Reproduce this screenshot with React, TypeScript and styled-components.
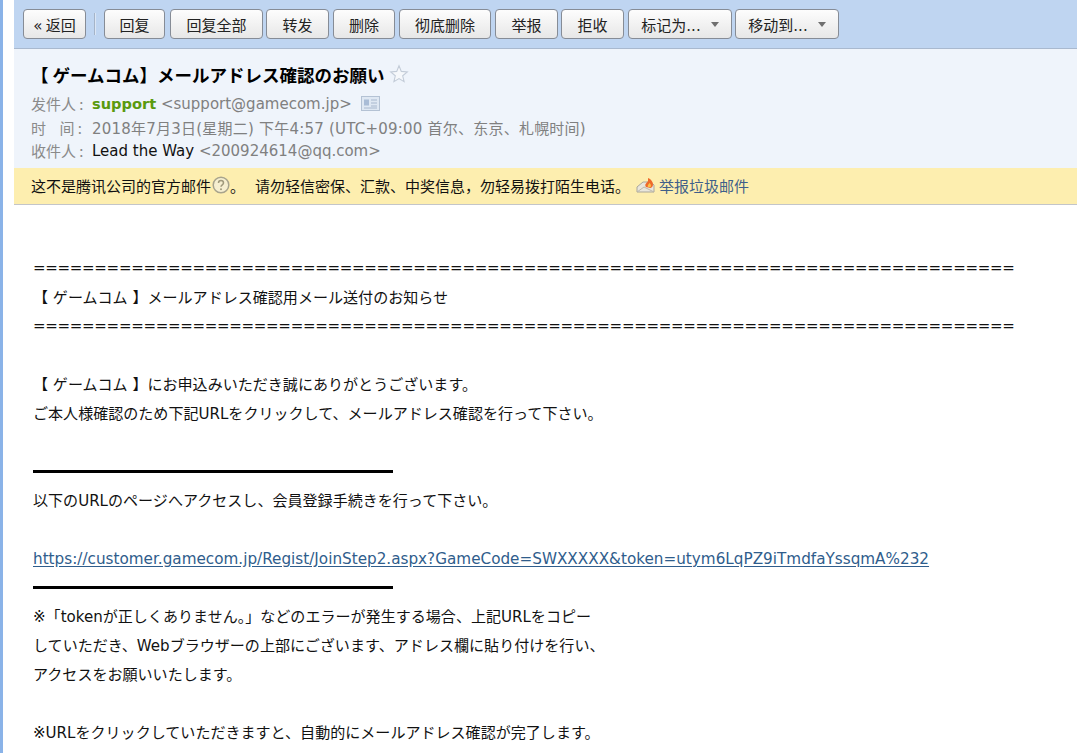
import React from "react";
import styled, { createGlobalStyle } from "styled-components";

const Global = createGlobalStyle`
  html, body { margin: 0; padding: 0; height: 753px; overflow: hidden; background: #fff; }
  body { font-family: "DejaVu Sans", "Noto Sans CJK SC", sans-serif; font-size: 15px; color: #000; }
`;
const Page = styled.div`
  display: flex;
  width: 1077px;
  height: 753px;
  overflow: hidden;
  background: #fff;
`;
const Strip = styled.div`
  width: 3px;
  margin-right: 11px;
  flex: none;
  background: #8ab3e8;
`;
const Main = styled.div`
  flex: 1;
  min-width: 0;
`;
const Toolbar = styled.div`
  height: 49px;
  display: flex;
  align-items: flex-start;
  padding: 9px 0 0 9px;
  box-sizing: border-box;
  background: #bfd5f1;
  border-bottom: 1px solid #a9b9cf;
`;
const Btn = styled.div<{ $w: number; $ml?: number }>`
  width: ${(p) => p.$w}px;
  margin-left: ${(p) => p.$ml ?? 3}px;
  height: 30px;
  flex: none;
  box-sizing: border-box;
  display: flex;
  align-items: center;
  justify-content: center;
  gap: 10px;
  border: 1px solid #868c96;
  border-radius: 4px;
  background: linear-gradient(#fdfdfd, #e7e7e7);
  font-family: "Noto Sans CJK SC", "DejaVu Sans", sans-serif;
  font-size: 15px;
  color: #222;
  white-space: pre;
`;
const Latin = styled.span`
  font-family: "DejaVu Sans", sans-serif;
  font-size: 15px;
`;
const Caret = styled.span`
  width: 0;
  height: 0;
  border-left: 4.5px solid transparent;
  border-right: 4.5px solid transparent;
  border-top: 5px solid #6f6f6f;
`;
const Sep = styled.div`
  width: 1px;
  height: 22px;
  margin: 4px 0 0 8px;
  background: #a5b4c8;
  border-right: 1px solid #dbe6f5;
  flex: none;
`;
const Header = styled.div`
  height: 119px;
  box-sizing: border-box;
  padding: 12px 0 0 17px;
  background: #eff4fb;
`;
const Title = styled.div`
  display: flex;
  align-items: center;
  height: 26px;
  margin-bottom: 5px;
  font-family: "Noto Sans CJK JP", sans-serif;
  font-size: 17.5px;
  font-weight: 700;
  color: #000;
  white-space: pre;
`;
const Meta = styled.div`
  display: flex;
  align-items: center;
  height: 23.5px;
  font-size: 15px;
  color: #808080;
`;
const MetaText = styled.span`
  white-space: pre;
`;
const TimeText = styled(MetaText)`
  letter-spacing: 0.22px;
`;
const Label = styled.span`
  display: inline-block;
  width: 61px;
  font-family: "Noto Sans CJK SC", sans-serif;
  color: #8a8a8a;
  white-space: pre;
`;
const Sender = styled.b`
  color: #5a9a0f;
  font-weight: 700;
  font-size: 14.6px;
`;
const Dark = styled.span`
  color: #111;
`;
const Warn = styled.div`
  height: 37px;
  box-sizing: border-box;
  padding: 0 0 2px 17px;
  display: flex;
  align-items: center;
  background: #fdeeaf;
  border-bottom: 1px solid #c3c5c9;
  font-family: "Noto Sans CJK SC", sans-serif;
  font-size: 15px;
  color: #111;
  white-space: pre;
`;
const WarnLink = styled.span`
  color: #3f5f8a;
  margin-left: 4px;
`;
const Body = styled.div`
  padding: 49px 0 0 19px;
`;
const Line = styled.div`
  height: 29px;
  box-sizing: border-box;
  padding-top: 1px;
  line-height: 28px;
  font-family: "DejaVu Sans", "Noto Sans CJK JP", sans-serif;
  font-size: 15.05px;
  color: #111;
  white-space: pre;
`;
const EqLine = styled(Line)`
  padding-top: 0;
  line-height: 29px;
  font-size: 15px;
  letter-spacing: -0.3px;
`;
const RuleLine = styled(Line)`
  padding-top: 0;
  display: flex;
  align-items: center;
`;
const Rule = styled.div`
  width: 360px;
  height: 3px;
  background: #000;
`;
const Mail = styled.span`
  color: #2f5d8c;
  font-size: 15.23px;
  text-decoration: underline;
  text-underline-offset: 2px;
`;

const Star = () => (
  <svg width="20" height="20" viewBox="0 0 20 20" style={{ marginLeft: 5 }}>
    <path d="M10 1.8l2.3 5.6 6 .5-4.6 3.9 1.4 5.9L10 14.6l-5.1 3.1 1.4-5.900L1.700 7.900l6-.5z" fill="#f6f8fb" stroke="#c3ccd8" strokeWidth="1.1" />
  </svg>
);
const Card = () => (
  <svg width="19" height="15" viewBox="0 0 19 15" style={{ marginLeft: 9 }}>
    <rect x="0.5" y="0.5" width="18" height="14" fill="#dfe8f3" stroke="#b4c2d4" />
    <rect x="3" y="3.500" width="5" height="6" fill="#a9bcd6" />
    <path d="M10 4h6M10 7h6M10 10h6M3 12h13" stroke="#a8b8ce" />
  </svg>
);
const Help = () => (
  <svg width="18" height="18" viewBox="0 0 18 18" style={{ marginLeft: 1 }}>
    <circle cx="9" cy="9" r="7.800" fill="#f6efd0" stroke="#a8a48c" strokeWidth="1.500" />
    <path d="M6.500 7c0-3.200 5-3.200 5 0 0 1.800-2.500 1.900-2.500 3.800" fill="none" stroke="#a09a7c" strokeWidth="1.500" />
    <circle cx="9" cy="13.200" r="1" fill="#a09a7c" />
  </svg>
);
const SpamIcon = () => (
  <svg width="19" height="17" viewBox="0 0 19 17" style={{ marginLeft: 6 }}>
    <path d="M1 15l0-5 6-5 8 0 3 3 0 7z" fill="#e9e6dc" stroke="#a9a69b" />
    <path d="M1 15l7-5 10 5" fill="none" stroke="#bdb9ab" />
    <path d="M10 10c-2-3 1-4 2-6 0-1.500 0-2.500 0-3 3 1 5 4 5 6.500 0 2-1 3-2.500 3.500z" fill="#ee6a2a" />
    <path d="M12 10c-1-1.500.5-2.500 1.500-4 1 1 2 2.500 1 4z" fill="#fbc04a" />
  </svg>
);

const eq = "=".repeat(80);

export default function App() {
  return (
    <Page>
      <Global />
      <Strip />
      <Main>
        <Toolbar>
          <Btn $w={63} $ml={0}><span><Latin>«</Latin> 返回</span></Btn>
          <Sep />
          <Btn $w={61} $ml={8}>回复</Btn>
          <Btn $w={93} $ml={5}>回复全部</Btn>
          <Btn $w={63}>转发</Btn>
          <Btn $w={62} $ml={4}>删除</Btn>
          <Btn $w={92} $ml={4}>彻底删除</Btn>
          <Btn $w={63} $ml={4}>举报</Btn>
          <Btn $w={63}>拒收</Btn>
          <Btn $w={104} $ml={4}><span>标记为<Latin>...</Latin></span><Caret /></Btn>
          <Btn $w={104}><span>移动到<Latin>...</Latin></span><Caret /></Btn>
        </Toolbar>
        <Header>
          <Title>【 ゲームコム】メールアドレス確認のお願い<Star /></Title>
          <Meta><Label>发件人 : </Label><MetaText><Sender>support</Sender> {"<support@gamecom.jp>"}</MetaText><Card /></Meta>
          <Meta><Label>时    间 : </Label><TimeText>2018年7月3日(星期二) 下午4:57 (UTC+09:00 首尔、东京、札幌时间)</TimeText></Meta>
          <Meta><Label>收件人 : </Label><MetaText><Dark>Lead the Way</Dark> {"<200924614@qq.com>"}</MetaText></Meta>
        </Header>
        <Warn>
          这不是腾讯公司的官方邮件<Help />。   请勿轻信密保、汇款、中奖信息，勿轻易拨打陌生电话。<SpamIcon /><WarnLink>举报垃圾邮件</WarnLink>
        </Warn>
        <Body>
          <EqLine>{eq}</EqLine>
          <Line>【 ゲームコム 】メールアドレス確認用メール送付のお知らせ</Line>
          <EqLine>{eq}</EqLine>
          <Line />
          <Line>【 ゲームコム 】にお申込みいただき誠にありがとうございます。</Line>
          <Line>ご本人様確認のため下記URLをクリックして、メールアドレス確認を行って下さい。</Line>
          <Line />
          <RuleLine><Rule /></RuleLine>
          <Line>以下のURLのページへアクセスし、会員登録手続きを行って下さい。</Line>
          <Line />
          <Line><Mail>https://customer.gamecom.jp/Regist/JoinStep2.aspx?GameCode=SWXXXXX&amp;token=utym6LqPZ9iTmdfaYssqmA%232</Mail></Line>
          <RuleLine><Rule /></RuleLine>
          <Line>※「tokenが正しくありません。」などのエラーが発生する場合、上記URLをコピー</Line>
          <Line>していただき、Webブラウザーの上部にございます、アドレス欄に貼り付けを行い、</Line>
          <Line>アクセスをお願いいたします。</Line>
          <Line />
          <Line>※URLをクリックしていただきますと、自動的にメールアドレス確認が完了します。</Line>
        </Body>
      </Main>
    </Page>
  );
}
